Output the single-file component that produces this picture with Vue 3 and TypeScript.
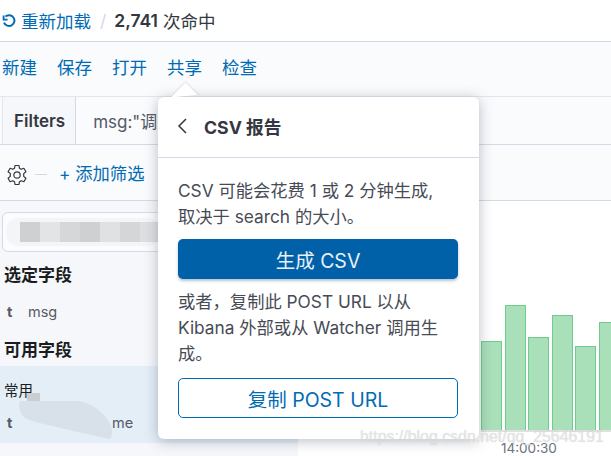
<script setup lang="ts">
interface Bar {
  top: number;
}

const navItems: string[] = ["新建", "保存", "打开", "共享", "检查"];
const mosaic: string[] = ["#cfd0d2", "#e3e4e6", "#d6d7d9", "#cfd0d2", "#e0e1e3", "#d5d6d8", "#dedfe1"];
const bars: Bar[] = [{ top: 341 }, { top: 305 }, { top: 337 }, { top: 315 }, { top: 346 }, { top: 322 }];
const chartBottom = 430;
</script>

<template>
  <div class="page">
    <header class="top">
      <svg class="reload" width="14" height="14" viewBox="0 0 14 14" fill="none" stroke="#006bb4" stroke-width="2">
        <path d="M3.4 2.6 A5.4 5.4 0 1 1 2 8.6" />
        <path d="M1.6 1.6 V5.6 H5.6" stroke-width="1.8" />
      </svg>
      <span class="link">重新加载</span>
      <span class="sep">/</span>
      <strong class="hits">2,741</strong>
      <span class="hits-label">次命中</span>
    </header>

    <nav class="nav">
      <span v-for="item in navItems" :key="item" class="nav-item">{{ item }}</span>
    </nav>

    <section class="filters">
      <div class="filters-box">
        <span class="filters-label">Filters</span>
        <span class="filters-query">msg:"调</span>
      </div>
    </section>

    <section class="filter-actions">
      <svg class="gear" width="22" height="22" viewBox="0 0 22 22" fill="none" stroke="#343741" stroke-width="1.2">
        <path d="M9 1.5 h4 l.5 2.8 1.7 1 2.7-1 2 3.4-2.2 1.9 v2.8 l2.2 1.9-2 3.4-2.7-1-1.7 1-.5 2.8 H9 l-.5-2.8-1.7-1-2.7 1-2-3.4 2.2-1.9 V9.6 L2.1 7.7 l2-3.4 2.7 1 1.7-1 z" stroke-linejoin="round" />
        <circle cx="11" cy="11" r="3.2" />
      </svg>
      <span class="dash"></span>
      <span class="add-filter">+ 添加筛选</span>
    </section>

    <main class="content">
      <aside class="sidebar">
        <div class="search">
          <div class="search-blur">
            <span v-for="(c, i) in mosaic" :key="i" class="cell" :style="{ background: c }"></span>
          </div>
        </div>
        <h3 class="group-title first">选定字段</h3>
        <div class="field"><b>t</b><span>msg</span></div>
        <h3 class="group-title second">可用字段</h3>
        <div class="popular">
          <div class="popular-title">常用</div>
          <div class="field last"><b>t</b><span class="field-name">me</span></div>
          <svg class="smudge" width="96" height="48" viewBox="0 0 96 48">
            <path d="M3 9 H62 C78 12 90 24 94 34 C96 40 95 46 92 47 C80 44 70 42 60 40 C40 34 20 32 8 26 C2 20 1 14 3 9 Z" fill="#d8e1e9" />
            <rect x="10" y="1" width="13" height="8" fill="#c9ced3" />
          </svg>
        </div>
      </aside>

      <div class="chart">
        <div class="plot">
          <div
            v-for="(b, i) in bars"
            :key="i"
            class="bar"
            :style="{ height: chartBottom - b.top + 'px' }"
          ></div>
        </div>
        <div class="axis-label">14:00:30</div>
      </div>
    </main>

    <div class="popover">
      <div class="arrow"></div>
      <div class="pop-head">
        <svg width="12" height="18" viewBox="0 0 12 18" fill="none" stroke="#343741" stroke-width="1.5">
          <path d="M10 2 L3 9 L10 16" />
        </svg>
        <span>CSV 报告</span>
      </div>
      <div class="pop-body">
        <p class="text">CSV 可能会花费 1 或 2 分钟生成,<br />取决于 search 的大小。</p>
        <button class="btn primary">生成 CSV</button>
        <p class="text second-text">或者，复制此 POST URL 以从<br />Kibana 外部或从 Watcher 调用生<br />成。</p>
        <button class="btn ghost">复制 POST URL</button>
      </div>
    </div>

    <div class="watermark">https://blog.csdn.net/qq_25646191</div>
  </div>
</template>

<style>
html,
body {
  margin: 0;
  background: #fff;
}
</style>

<style scoped>
.page {
  position: relative;
  width: 611px;
  height: 456px;
  overflow: hidden;
  background: #fff;
  color: #343741;
  font-family: Inter, "Noto Sans CJK SC", sans-serif;
}

.top {
  height: 41px;
  display: flex;
  align-items: center;
  padding-left: 2px;
  border-bottom: 1px solid #d3dae6;
  font-size: 17.5px;
}

.reload {
  margin-right: 5px;
}

.link {
  color: #006bb4;
}

.sep {
  margin: 0 8px 0 9px;
  color: #d3dae6;
}

.hits {
  font-weight: 600;
  margin-right: 5px;
}

.nav {
  height: 54px;
  display: flex;
  align-items: center;
  gap: 20px;
  padding: 0 2px 6px;
  box-sizing: border-box;
  background: #fafbfd;
  font-size: 17.5px;
  color: #006bb4;
}

.filters {
  height: 49px;
  padding-left: 2px;
  box-sizing: border-box;
  background: #fafbfd;
  border-top: 1px solid #e3e6ee;
  border-bottom: 1px solid #d3dae6;
}

.filters-box {
  height: 47px;
  display: flex;
  align-items: center;
  box-sizing: border-box;
  font-size: 17px;
}

.filters-label {
  height: 100%;
  display: flex;
  align-items: center;
  padding: 0 10px 0 11px;
  font-weight: 600;
  background: #f5f7fa;
  border-left: 1px solid #e3e6ee;
  border-right: 1px solid #d3dae6;
}

.filters-query {
  margin-left: 17px;
  color: #555a66;
}

.filter-actions {
  height: 56px;
  display: flex;
  align-items: center;
  padding: 4px 0 0 6px;
  box-sizing: border-box;
  background: #fafbfd;
  border-bottom: 1px solid #d3dae6;
}

.dash {
  width: 12px;
  height: 1px;
  margin: 0 12px 0 7px;
  background: #d3dae6;
}

.add-filter {
  margin-bottom: 4px;
  color: #006bb4;
  font-size: 17.3px;
}

.content {
  display: flex;
  height: 255px;
}

.sidebar {
  position: relative;
  width: 298px;
  height: 255px;
  flex: none;
  background: #f5f7fa;
}

.search {
  width: 200px;
  height: 40px;
  margin: 11px 0 0 2px;
  display: flex;
  align-items: center;
  background: #fbfcfd;
  border: 1px solid #d3dae6;
  border-radius: 6px;
  box-sizing: border-box;
}

.search-blur {
  display: flex;
  margin-left: 3px;
  padding: 4px 0 4px 14px;
  background: #f4f5f7;
  border-radius: 12px;
}

.cell {
  width: 20px;
  height: 20px;
}

.group-title {
  margin: 0 0 0 4px;
  font-size: 17px;
  line-height: 24px;
  font-weight: 700;
  color: #1a1c21;
}

.group-title.first {
  margin-top: 11px;
}

.group-title.second {
  margin-top: 14px;
}

.field {
  display: flex;
  align-items: center;
  height: 26px;
  margin-top: 11px;
  padding-left: 7px;
  font-size: 14.5px;
  color: #555a66;
}

.field b {
  width: 21px;
  font-weight: 700;
}

.popular {
  position: relative;
  height: 77px;
  margin-top: 4px;
  background: #e4eef7;
}

.popular-title {
  padding: 14px 0 0 4px;
  font-size: 14.5px;
  line-height: 22px;
  color: #1a1c21;
}

.field.last {
  margin-top: 7px;
}

.field-name {
  margin-left: 84px;
}

.smudge {
  position: absolute;
  left: 17px;
  top: 26px;
}

.chart {
  position: relative;
  flex: 1;
}

.plot {
  display: flex;
  align-items: flex-end;
  gap: 2.5px;
  height: 231px;
  margin-left: 183px;
  border-bottom: 2px solid #e0e0e0;
  box-sizing: border-box;
  overflow: hidden;
}

.bar {
  width: 21px;
  flex: none;
  box-sizing: border-box;
  background: #a9dfb9;
  border: 1.5px solid #6fcb8e;
  border-bottom: none;
}

.axis-label {
  margin: 10px 0 0 203px;
  font-size: 13.5px;
  line-height: 12px;
  color: #6a717d;
}

.popover {
  position: absolute;
  left: 158px;
  top: 97px;
  width: 321px;
  height: 342px;
  background: #fff;
  border-radius: 6px;
  box-shadow: 0 2px 14px rgba(60, 70, 90, 0.35);
}

.arrow {
  position: absolute;
  left: 16.5px;
  top: -10.5px;
  width: 21px;
  height: 21px;
  background: #fff;
  transform: rotate(45deg);
  box-shadow: -1px -1px 2px rgba(60, 70, 90, 0.12);
  clip-path: polygon(-5px -5px, 100% -5px, 0 100%);
}

.pop-head {
  position: relative;
  height: 61px;
  display: flex;
  align-items: center;
  gap: 16px;
  padding: 0 0 2px 18px;
  box-sizing: border-box;
  border-bottom: 1px solid #d3dae6;
  font-size: 17.7px;
  font-weight: 700;
}

.pop-body {
  padding: 20px 21px 0 20px;
}

.text {
  margin: 0;
  font-size: 17.3px;
  line-height: 26px;
  color: #474b55;
}

.second-text {
  margin-top: 10px;
}

.btn {
  display: block;
  width: 100%;
  height: 40px;
  margin-top: 9px;
  border-radius: 5px;
  font-family: inherit;
  font-size: 19.5px;
  box-sizing: border-box;
}

.primary {
  background: #0061a8;
  border: none;
  color: #e8f1f8;
  box-shadow: 0 2px 3px rgba(0, 60, 110, 0.3);
}

.ghost {
  margin-top: 11px;
  background: #fff;
  border: 1px solid #006bb4;
  color: #006bb4;
}

.watermark {
  position: absolute;
  left: 360px;
  top: 432px;
  font-family: "Liberation Sans", sans-serif;
  font-size: 15.9px;
  line-height: 10px;
  color: rgba(232, 232, 232, 0.7);
  text-shadow: 0 0 1px rgba(150, 150, 150, 0.4);
  white-space: nowrap;
}
</style>
